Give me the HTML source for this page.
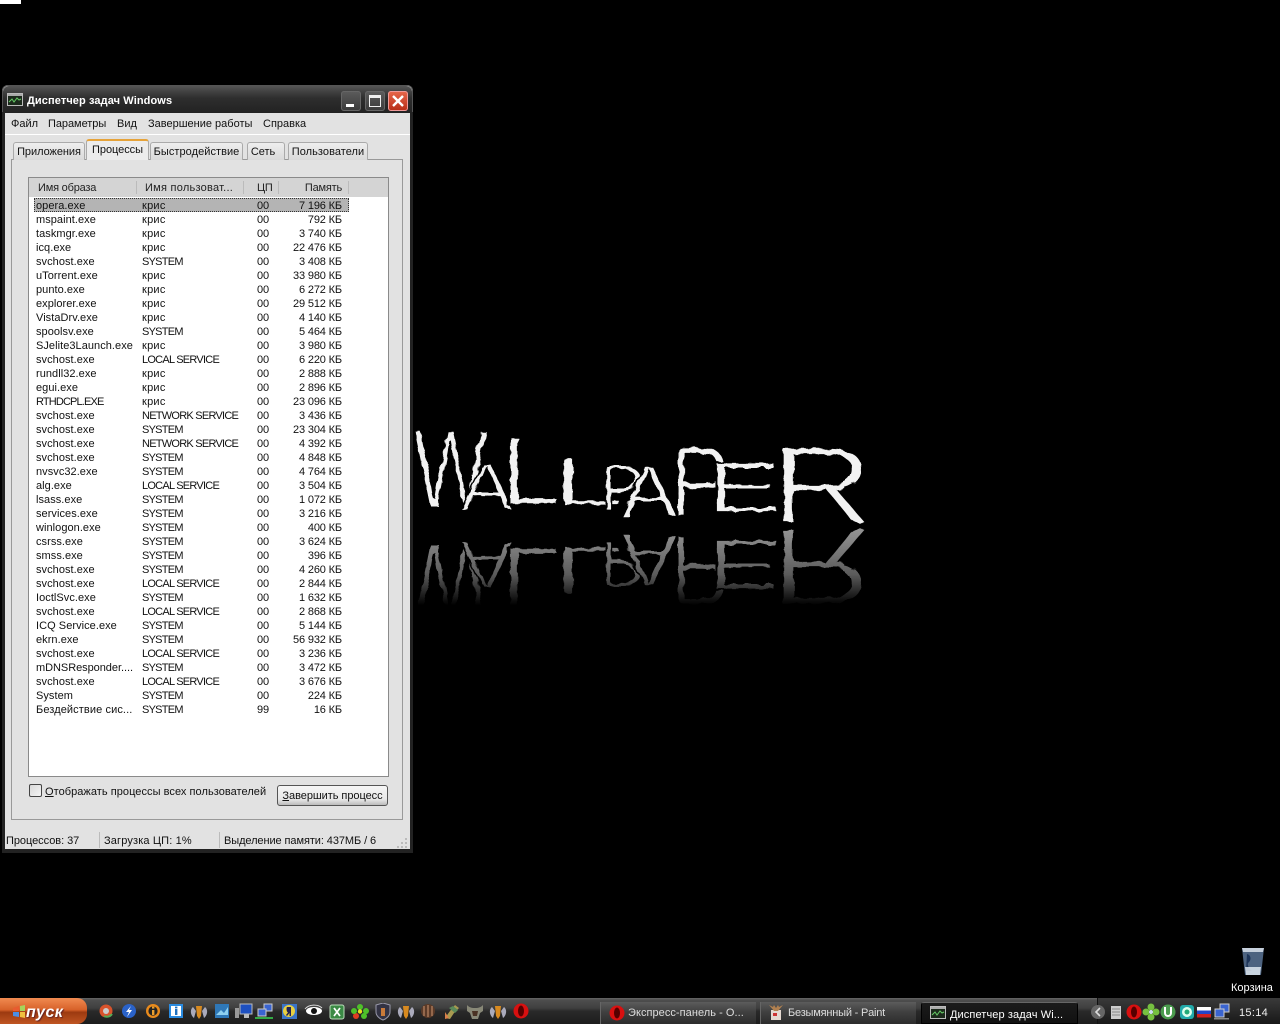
<!DOCTYPE html>
<html><head><meta charset="utf-8"><style>
html,body{margin:0;padding:0;background:#000;width:1280px;height:1024px;overflow:hidden}
body{position:relative;font:11px/14px "Liberation Sans","DejaVu Sans",sans-serif;color:#111}
.a{position:absolute;white-space:nowrap}
#win{left:2px;top:85px;width:411px;height:768px;background:#e2e2e2;border-radius:6px 6px 0 0;box-shadow:inset 0 0 0 1px #555}
#tb{left:1px;top:1px;width:409px;height:27px;border-radius:6px 6px 0 0;background:linear-gradient(#555 0,#4a4a4a 3px,#2e2e2e 12px,#222 27px)}
.bord{background:#222}
.wb{top:6px;width:20px;height:20px;border-radius:3px;background:linear-gradient(#5c5c5c,#3a3a3a);box-shadow:inset 0 0 0 1px #666}
.tab{top:142px;height:18px;background:linear-gradient(#eee,#dadada);border:1px solid #aaa;border-bottom:none;border-radius:3px 3px 0 0;text-align:center;line-height:19px;box-sizing:border-box;font-size:11px;letter-spacing:-.05px}
.m{top:117px;letter-spacing:0}
.r{position:absolute;left:28px;width:361px;height:14px;letter-spacing:-.15px}
.r span{position:absolute;top:1px;white-space:nowrap}
.n{left:8px;letter-spacing:.05px}.u{left:114px;letter-spacing:.25px}.c{left:229px}.p{right:47px}
.r span.s{letter-spacing:-.75px}
.h{top:181px;color:#222;letter-spacing:-.2px}
.ic{position:absolute;top:1003px}
.tbtn{top:1002px;height:22px;color:#ddd;font-size:11px;line-height:22px;box-sizing:border-box}
</style></head><body>
<div class="a" style="left:0;top:0;width:21px;height:4px;background:#fff"></div>

<svg class="a" style="left:400px;top:420px" width="490" height="200" viewBox="400 420 490 200" font-family="Liberation Sans, sans-serif" font-size="100">
<defs>
<filter id="rg" x="-10%" y="-10%" width="120%" height="120%"><feTurbulence type="fractalNoise" baseFrequency=".09" numOctaves="2" seed="4"/><feDisplacementMap in="SourceGraphic" scale="6"/></filter>
<linearGradient id="fd" gradientUnits="userSpaceOnUse" x1="0" y1="528" x2="0" y2="605"><stop offset="0" stop-color="#fff" stop-opacity=".62"/><stop offset=".6" stop-color="#fff" stop-opacity=".38"/><stop offset="1" stop-color="#fff" stop-opacity="0"/></linearGradient>
<mask id="mk" maskUnits="userSpaceOnUse" x="400" y="420" width="490" height="200"><rect x="400" y="525" width="490" height="95" fill="url(#fd)"/></mask>
<g id="lg" fill="#f2f2f2" stroke="#000" stroke-width="2.6" filter="url(#rg)">
<text transform="translate(413 507) scale(.79 1.12)">W</text>
<text transform="translate(460 510) scale(.8 .68)">A</text>
<text transform="translate(500 505) scale(1.1 1)">L</text>
<text transform="translate(551 505) scale(1.33 .68)">L</text>
<text transform="translate(600 510) scale(.65 .65)">P</text>
<text transform="translate(620 517) scale(.86 .73)">A</text>
<text transform="translate(670 517) scale(.9 1.02)">P</text>
<text transform="translate(706 512) scale(1.15 .71)">E</text>
<text transform="translate(770 523) scale(1.44 1.1)">R</text>
</g></defs>
<use href="#lg"/>
<g mask="url(#mk)"><use href="#lg" transform="translate(0 1052) scale(1 -1)"/></g>
</svg>

<div id="win" class="a">
<div id="tb" class="a"></div>
<div class="a bord" style="left:0;top:27px;width:3px;height:740px"></div>
<div class="a bord" style="right:0;top:27px;width:3px;height:740px"></div>
<div class="a bord" style="left:0;top:764px;width:411px;height:4px"></div>
</div>
<svg class="a" style="left:7px;top:93px" width="16" height="14"><rect x=".5" y=".5" width="15" height="12" fill="#1c2a1c" stroke="#bbb"/><rect x="1" y="1" width="14" height="2" fill="#aaa"/><path d="M2 9l3-3 2 3 3-4 2 2 2-1" fill="none" stroke="#6c6" /></svg>
<div class="a" style="left:27px;top:94px;color:#fff;font-weight:700;font-size:11px;letter-spacing:.1px">Диспетчер задач Windows</div>
<div class="a wb" style="left:341px;top:91px"><div class="a" style="left:5px;top:13px;width:8px;height:3px;background:#fff"></div></div>
<div class="a wb" style="left:365px;top:91px"><div class="a" style="left:4px;top:4px;border:1px solid #eee;border-top:3px solid #eee;box-sizing:border-box;width:12px;height:12px"></div></div>
<div class="a wb" style="left:388px;top:91px;background:linear-gradient(#e8684c,#b62d16);box-shadow:inset 0 0 0 1px #e99"><svg class="a" style="left:0;top:0" width="20" height="20"><path d="M5 5l10 10M15 5L5 15" stroke="#fff" stroke-width="2.4"/></svg></div>

<div class="a m" style="left:11px">Файл</div><div class="a m" style="left:48px;letter-spacing:-.05px">Параметры</div><div class="a m" style="left:117px">Вид</div><div class="a m" style="left:148px">Завершение работы</div><div class="a m" style="left:263px">Справка</div>
<div class="a" style="left:5px;top:134px;width:405px;height:1px;background:#fff"></div>

<div class="a" style="left:11px;top:159px;width:392px;height:661px;box-sizing:border-box;background:#e2e2e2;border:1px solid #999"></div>
<div class="a tab" style="left:13px;width:72px">Приложения</div>
<div class="a tab" style="left:150px;width:93px;letter-spacing:.05px">Быстродействие</div>
<div class="a tab" style="left:247px;width:38px;padding-right:6px">Сеть</div>
<div class="a tab" style="left:288px;width:80px;letter-spacing:.05px">Пользователи</div>
<div class="a tab" style="left:86px;top:139px;width:63px;height:21px;background:#ececec;border-top:2px solid #e6a33a;line-height:18px">Процессы</div>

<div class="a" style="left:28px;top:177px;width:361px;height:600px;box-sizing:border-box;background:#fff;border:1px solid #8a8a8a"></div>
<div class="a" style="left:29px;top:178px;width:359px;height:19px;background:#d4d4d4"></div>
<div class="a h" style="left:38px">Имя образа</div><div class="a h" style="left:145px;letter-spacing:.25px">Имя пользоват...</div><div class="a h" style="left:257px">ЦП</div><div class="a h" style="right:938px">Память</div>
<div class="a" style="left:136px;top:181px;width:1px;height:13px;background:#bbb"></div><div class="a" style="left:243px;top:181px;width:1px;height:13px;background:#bbb"></div><div class="a" style="left:278px;top:181px;width:1px;height:13px;background:#bbb"></div><div class="a" style="left:348px;top:181px;width:1px;height:13px;background:#bbb"></div>
<div class="a" style="left:34px;top:198px;width:315px;height:14px;box-sizing:border-box;background:#b4b4b4;border:1px dotted #333"></div>

<div class="r" style="top:198px"><span class="n">opera.exe</span><span class="u">крис</span><span class="c">00</span><span class="p">7 196 КБ</span></div>
<div class="r" style="top:212px"><span class="n">mspaint.exe</span><span class="u">крис</span><span class="c">00</span><span class="p">792 КБ</span></div>
<div class="r" style="top:226px"><span class="n">taskmgr.exe</span><span class="u">крис</span><span class="c">00</span><span class="p">3 740 КБ</span></div>
<div class="r" style="top:240px"><span class="n">icq.exe</span><span class="u">крис</span><span class="c">00</span><span class="p">22 476 КБ</span></div>
<div class="r" style="top:254px"><span class="n">svchost.exe</span><span class="u s">SYSTEM</span><span class="c">00</span><span class="p">3 408 КБ</span></div>
<div class="r" style="top:268px"><span class="n">uTorrent.exe</span><span class="u">крис</span><span class="c">00</span><span class="p">33 980 КБ</span></div>
<div class="r" style="top:282px"><span class="n">punto.exe</span><span class="u">крис</span><span class="c">00</span><span class="p">6 272 КБ</span></div>
<div class="r" style="top:296px"><span class="n">explorer.exe</span><span class="u">крис</span><span class="c">00</span><span class="p">29 512 КБ</span></div>
<div class="r" style="top:310px"><span class="n">VistaDrv.exe</span><span class="u">крис</span><span class="c">00</span><span class="p">4 140 КБ</span></div>
<div class="r" style="top:324px"><span class="n">spoolsv.exe</span><span class="u s">SYSTEM</span><span class="c">00</span><span class="p">5 464 КБ</span></div>
<div class="r" style="top:338px"><span class="n">SJelite3Launch.exe</span><span class="u">крис</span><span class="c">00</span><span class="p">3 980 КБ</span></div>
<div class="r" style="top:352px"><span class="n">svchost.exe</span><span class="u s">LOCAL SERVICE</span><span class="c">00</span><span class="p">6 220 КБ</span></div>
<div class="r" style="top:366px"><span class="n">rundll32.exe</span><span class="u">крис</span><span class="c">00</span><span class="p">2 888 КБ</span></div>
<div class="r" style="top:380px"><span class="n">egui.exe</span><span class="u">крис</span><span class="c">00</span><span class="p">2 896 КБ</span></div>
<div class="r" style="top:394px"><span class="n" style="letter-spacing:-.85px">RTHDCPL.EXE</span><span class="u">крис</span><span class="c">00</span><span class="p">23 096 КБ</span></div>
<div class="r" style="top:408px"><span class="n">svchost.exe</span><span class="u s">NETWORK SERVICE</span><span class="c">00</span><span class="p">3 436 КБ</span></div>
<div class="r" style="top:422px"><span class="n">svchost.exe</span><span class="u s">SYSTEM</span><span class="c">00</span><span class="p">23 304 КБ</span></div>
<div class="r" style="top:436px"><span class="n">svchost.exe</span><span class="u s">NETWORK SERVICE</span><span class="c">00</span><span class="p">4 392 КБ</span></div>
<div class="r" style="top:450px"><span class="n">svchost.exe</span><span class="u s">SYSTEM</span><span class="c">00</span><span class="p">4 848 КБ</span></div>
<div class="r" style="top:464px"><span class="n">nvsvc32.exe</span><span class="u s">SYSTEM</span><span class="c">00</span><span class="p">4 764 КБ</span></div>
<div class="r" style="top:478px"><span class="n">alg.exe</span><span class="u s">LOCAL SERVICE</span><span class="c">00</span><span class="p">3 504 КБ</span></div>
<div class="r" style="top:492px"><span class="n">lsass.exe</span><span class="u s">SYSTEM</span><span class="c">00</span><span class="p">1 072 КБ</span></div>
<div class="r" style="top:506px"><span class="n">services.exe</span><span class="u s">SYSTEM</span><span class="c">00</span><span class="p">3 216 КБ</span></div>
<div class="r" style="top:520px"><span class="n">winlogon.exe</span><span class="u s">SYSTEM</span><span class="c">00</span><span class="p">400 КБ</span></div>
<div class="r" style="top:534px"><span class="n">csrss.exe</span><span class="u s">SYSTEM</span><span class="c">00</span><span class="p">3 624 КБ</span></div>
<div class="r" style="top:548px"><span class="n">smss.exe</span><span class="u s">SYSTEM</span><span class="c">00</span><span class="p">396 КБ</span></div>
<div class="r" style="top:562px"><span class="n">svchost.exe</span><span class="u s">SYSTEM</span><span class="c">00</span><span class="p">4 260 КБ</span></div>
<div class="r" style="top:576px"><span class="n">svchost.exe</span><span class="u s">LOCAL SERVICE</span><span class="c">00</span><span class="p">2 844 КБ</span></div>
<div class="r" style="top:590px"><span class="n">IoctlSvc.exe</span><span class="u s">SYSTEM</span><span class="c">00</span><span class="p">1 632 КБ</span></div>
<div class="r" style="top:604px"><span class="n">svchost.exe</span><span class="u s">LOCAL SERVICE</span><span class="c">00</span><span class="p">2 868 КБ</span></div>
<div class="r" style="top:618px"><span class="n">ICQ Service.exe</span><span class="u s">SYSTEM</span><span class="c">00</span><span class="p">5 144 КБ</span></div>
<div class="r" style="top:632px"><span class="n">ekrn.exe</span><span class="u s">SYSTEM</span><span class="c">00</span><span class="p">56 932 КБ</span></div>
<div class="r" style="top:646px"><span class="n">svchost.exe</span><span class="u s">LOCAL SERVICE</span><span class="c">00</span><span class="p">3 236 КБ</span></div>
<div class="r" style="top:660px"><span class="n" style="letter-spacing:-.05px">mDNSResponder....</span><span class="u s">SYSTEM</span><span class="c">00</span><span class="p">3 472 КБ</span></div>
<div class="r" style="top:674px"><span class="n">svchost.exe</span><span class="u s">LOCAL SERVICE</span><span class="c">00</span><span class="p">3 676 КБ</span></div>
<div class="r" style="top:688px"><span class="n">System</span><span class="u s">SYSTEM</span><span class="c">00</span><span class="p">224 КБ</span></div>
<div class="r" style="top:702px"><span class="n" style="letter-spacing:.1px">Бездействие сис...</span><span class="u s">SYSTEM</span><span class="c">99</span><span class="p">16 КБ</span></div>

<div class="a" style="left:29px;top:784px;width:11px;height:11px;border:1px solid #444;border-radius:2px;background:linear-gradient(135deg,#d8d8d8,#f4f4f4)"></div>
<div class="a" style="left:45px;top:785px;letter-spacing:.05px"><u>О</u>тображать процессы всех пользователей</div>
<div class="a" style="left:277px;top:785px;width:111px;height:21px;box-sizing:border-box;border:1px solid #555;border-radius:3px;background:linear-gradient(#f6f6f6,#e8e8e8 70%,#bbb);text-align:center;line-height:21px;letter-spacing:-.05px"><u>З</u>авершить процесс</div>

<div class="a" style="left:99px;top:832px;width:1px;height:16px;background:#bbb"></div><div class="a" style="left:219px;top:832px;width:1px;height:16px;background:#bbb"></div>
<div class="a" style="left:6px;top:834px;letter-spacing:-.05px">Процессов: 37</div>
<div class="a" style="left:104px;top:834px;letter-spacing:.15px">Загрузка ЦП: 1%</div>
<div class="a" style="left:224px;top:834px;letter-spacing:-.08px">Выделение памяти: 437МБ / 6</div>
<svg class="a" style="left:397px;top:838px" width="11" height="11" fill="#bbb"><rect x="8" y="0" width="2" height="2"/><rect x="4" y="4" width="2" height="2"/><rect x="8" y="4" width="2" height="2"/><rect x="0" y="8" width="2" height="2"/><rect x="4" y="8" width="2" height="2"/><rect x="8" y="8" width="2" height="2"/></svg>

<svg class="a" style="left:1239px;top:945px" width="28" height="32"><path d="M3 3h22l-3 27H6z" fill="#4d6380"/><path d="M3 3h22l-1 4H4z" fill="#c6d0dc"/><path d="M8 9c4 1 5 6 1 9-1 2 1 6 4 8H7z" fill="#1d3458"/><path d="M6 22h16l-1 8H7z" fill="#dfe7f0" opacity=".85"/></svg>
<div class="a" style="left:1231px;top:981px;color:#fff">Корзина</div>

<div class="a" style="left:0;top:998px;width:1280px;height:26px;background:linear-gradient(#666 0,#4e4e4e 2px,#3f3f3f 10px,#2a2a2a 13px,#1d1d1d 26px)"></div>
<div class="a" style="left:0;top:998px;width:87px;height:26px;border-radius:0 10px 10px 0;background:linear-gradient(#f08a50,#d8622a 45%,#9c3a10 55%,#c05522)"></div>
<svg class="a" style="left:12px;top:1004px" width="14" height="16"><path d="M1 4l6-2v5H1z" fill="#e85c30"/><path d="M8 2l5-1v6H8z" fill="#a6d45a"/><path d="M1 8h6v5l-6-1z" fill="#4a8ee6"/><path d="M8 8h5v6l-5-1z" fill="#f0c040"/></svg>
<div class="a" style="left:26px;top:1003px;color:#fff;font:italic 700 16px/20px 'Liberation Sans',sans-serif;letter-spacing:.4px;text-shadow:1px 1px 1px #622">пуск</div>

<svg class="ic" style="left:99px" width="440" height="18">
<circle cx="7" cy="8" r="6.5" fill="#d8532c"/><circle cx="7" cy="8" r="3" fill="#ccc"/><path d="M5 13a6 6 0 008-2" stroke="#5a5" stroke-width="2" fill="none"/>
<circle cx="30" cy="8" r="7" fill="#2a62c8"/><path d="M32 3l-5 6h3l-2 5 5-7h-3z" fill="#fff"/>
<circle cx="54" cy="8" r="7" fill="#e88a1c"/><circle cx="54" cy="8" r="4.6" fill="#222"/><rect x="53" y="7" width="2.4" height="5" fill="#e8a030"/><rect x="53" y="3.6" width="2.4" height="2" fill="#e8a030"/>
<rect x="70" y="1" width="14" height="14" fill="#2a8be0"/><rect x="72" y="3" width="10" height="10" fill="#fff"/><rect x="76" y="6" width="2.4" height="6" fill="#1e70c0"/><rect x="76" y="3.6" width="2.4" height="1.8" fill="#1e70c0"/>
<g id="w1"><path d="M94 4c-3 2-3 8 1 11l2-7zM106 4c3 2 3 8-1 11l-2-7z" fill="#aab"/><path d="M97 3h6l-1 10-2 3-2-3z" fill="#d88a20"/></g>
<rect x="116" y="1" width="14" height="14" fill="#2f78b8"/><path d="M117 12l5-5 3 3 4-6v8z" fill="#8fd0f0"/>
<rect x="141" y="1" width="12" height="10" fill="#1e50c0" stroke="#bbb"/><rect x="145" y="11" width="5" height="4" fill="#bbb"/><rect x="136" y="5" width="4" height="10" fill="#999"/>
<rect x="165" y="1" width="8" height="7" fill="#3a64d0" stroke="#ccc"/><rect x="159" y="6" width="8" height="7" fill="#3a64d0" stroke="#ccc"/><rect x="156" y="14" width="18" height="2" fill="#3a4"/>
<rect x="183" y="1" width="15" height="15" fill="#3a74c8"/><circle cx="190" cy="8" r="6" fill="#e8d040"/><path d="M188 4h4v9h-1.500v-3l-2.500 3-1-1 2-2.500c-2-1-1.500-5.500-1-5.500z" fill="#225"/>
<ellipse cx="215" cy="8" rx="8" ry="4" fill="#fff"/><circle cx="215" cy="8" r="3" fill="#111"/><path d="M206 6c4-5 13-5 17-1" stroke="#ddd" fill="none"/>
<rect x="231" y="2" width="14" height="14" rx="2" fill="#3b8a45" stroke="#bdb"/><path d="M235 5l6 8M241 5l-6 8" stroke="#fff" stroke-width="1.700"/>
<g fill="#4ec02a"><circle cx="261" cy="4" r="3"/><circle cx="267" cy="8" r="3"/><circle cx="265" cy="13" r="3"/><circle cx="257" cy="13" r="3" fill="#e03c20"/><circle cx="255" cy="8" r="3"/></g><circle cx="261" cy="8.500" r="2.200" fill="#e8e020"/>
<path d="M277 2l7-2 7 2v7c0 4-4 7-7 8-3-1-7-4-7-8z" fill="#334" stroke="#99a"/><path d="M282 5h4v8h-4z" fill="#c87a3a"/>
<use href="#w1" x="207"/>
<circle cx="329" cy="8" r="7" fill="#5a3a28"/><path d="M325 3v10M329 2v12M333 3v10" stroke="#a87858" stroke-width="1.500"/>
<path d="M346 15l5-7 5-6 4 3-5 5-4 6z" fill="#a89a50"/><path d="M350 5l6 5 3-3-5-4z" fill="#5a8a5a"/><path d="M346 9l4 6-4 1z" fill="#d8804a"/>
<path d="M368 2c2 2 4 3 8 3s6-1 8-3v6l-3 2-2 6h-6l-2-6-3-2z" fill="#887"/><path d="M373 8h6l-1 5h-4z" fill="#4a3224"/>
<use href="#w1" x="299"/>
<circle cx="422" cy="8" r="7.500" fill="#d81010"/><ellipse cx="422" cy="8" rx="3" ry="5.500" fill="#500"/>
</svg>

<div class="a tbtn" style="left:600px;width:156px;background:linear-gradient(#5c5c5c,#404040 45%,#2c2c2c);border-left:1px solid #666;padding-left:27px;letter-spacing:.05px">Экспресс-панель - О...</div>
<svg class="a" style="left:609px;top:1005px" width="16" height="16"><circle cx="8" cy="8" r="7.500" fill="#d81010"/><ellipse cx="8" cy="8" rx="3" ry="5.500" fill="#500"/></svg>
<div class="a tbtn" style="left:760px;width:156px;background:linear-gradient(#5c5c5c,#404040 45%,#2c2c2c);border-left:1px solid #666;padding-left:27px;letter-spacing:-.2px">Безымянный - Paint</div>
<svg class="a" style="left:768px;top:1004px" width="16" height="17"><path d="M3 6h10v10H3z" fill="#e4d8d0"/><path d="M1 1l5 6h4l5-6-4 2-1-2-2 3-2-3-1 2z" fill="#b08050"/><rect x="5" y="9" width="4" height="3" fill="#c33"/></svg>
<div class="a tbtn" style="left:921px;width:157px;background:linear-gradient(#1b1b1b,#111);border:1px solid #000;border-top:1px solid #666;border-radius:3px 3px 0 0;padding-left:28px;color:#fff;line-height:24px;letter-spacing:.1px">Диспетчер задач Wi...</div>
<svg class="a" style="left:930px;top:1006px" width="16" height="14"><rect x=".5" y=".5" width="15" height="12" fill="#1c2a1c" stroke="#bbb"/><rect x="1" y="1" width="14" height="2" fill="#aaa"/><path d="M2 9l3-3 2 3 3-4 2 2 2-1" fill="none" stroke="#6c6"/></svg>

<div class="a" style="left:1097px;top:998px;width:183px;height:26px;background:linear-gradient(#3a3a3a,#181818);border-left:1px solid #111"></div>
<svg class="a" style="left:1089px;top:1003px" width="150" height="18">
<circle cx="9" cy="9" r="7" fill="#666"/><path d="M11 5l-4 4 4 4" stroke="#ddd" stroke-width="1.600" fill="none"/>
<rect x="22" y="3" width="10" height="13" fill="#ccc"/><path d="M23 6h8M23 9h8M23 12h8" stroke="#888"/>
<circle cx="45" cy="9" r="7.500" fill="#d81010"/><ellipse cx="45" cy="9" rx="3" ry="5.500" fill="#500"/>
<g fill="#76c040"><circle cx="62" cy="4" r="3.500"/><circle cx="67" cy="9" r="3.500"/><circle cx="62" cy="14" r="3.500"/><circle cx="57" cy="9" r="3.500"/></g><circle cx="62" cy="9" r="2" fill="#cde"/>
<circle cx="79" cy="9" r="7.500" fill="#4b9b4e"/><path d="M76 4v6a3 3 0 006 0V4" stroke="#fff" stroke-width="2" fill="none"/>
<rect x="91" y="2" width="14" height="14" rx="3" fill="#2aa"/><circle cx="98" cy="9" r="5" fill="#dfe"/><circle cx="98" cy="9" r="2.500" fill="#2a7"/>
<rect x="108" y="4" width="14" height="3.500" fill="#fff"/><rect x="108" y="7.500" width="14" height="3.500" fill="#2344c8"/><rect x="108" y="11" width="14" height="3.500" fill="#d02020"/>
<rect x="131" y="1" width="9" height="8" fill="#3a64d0" stroke="#ccc"/><rect x="126" y="6" width="9" height="8" fill="#3a64d0" stroke="#ccc"/><rect x="125" y="15" width="15" height="1.500" fill="#888"/>
</svg>
<div class="a" style="left:1239px;top:1006px;color:#eee;letter-spacing:.3px">15:14</div>
</body></html>
